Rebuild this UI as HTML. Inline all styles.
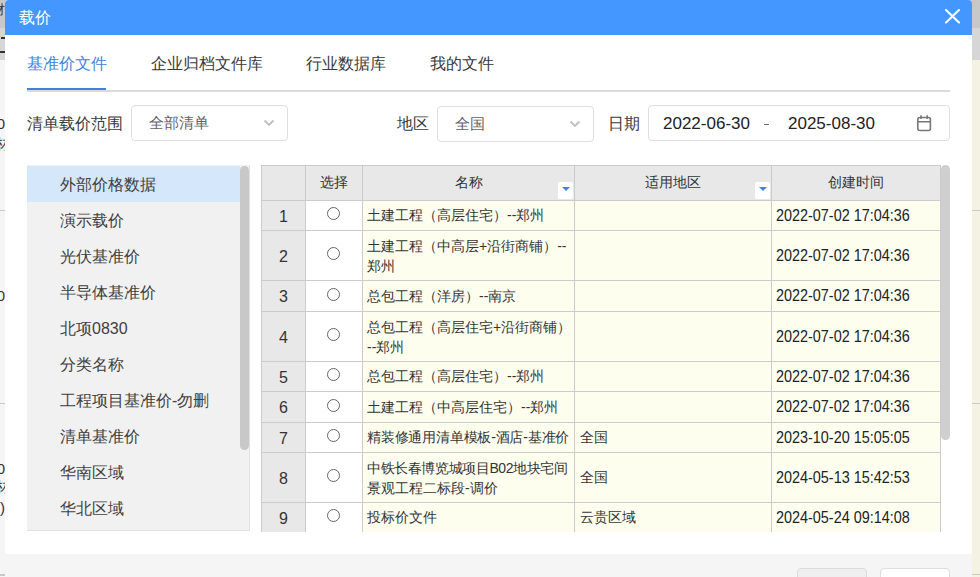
<!DOCTYPE html>
<html><head><meta charset="utf-8">
<style>
*{margin:0;padding:0;box-sizing:border-box}
html,body{width:980px;height:577px;overflow:hidden;background:#f5f5f5;font-family:"Liberation Sans",sans-serif;color:#333}
.abs{position:absolute}
.frag{left:-5px;width:10px;text-align:right;font-size:15px;line-height:20px;color:#333}
#bgl1{left:0;top:0;width:12px;height:28px;background:#c8c8c8}
#bgl2{left:0;top:28px;width:12px;height:32px;background:#d6d6d6}
#bgr1{left:965px;top:0;width:15px;height:28px;background:#c8c8c8}
#bgr2{left:965px;top:28px;width:15px;height:32px;background:#d6d6d6}
#bgr3{left:972px;top:60px;width:8px;height:517px;background:#f4f2e2}
#dlg{left:5px;top:0;width:967px;height:600px;background:#fff;border-radius:4px 4px 0 0;overflow:hidden}
#hdr{left:0;top:0;width:967px;height:35px;background:#4397fe}
#title{left:14px;top:8px;font-size:16px;line-height:20px;color:#fff}
.tab{top:54px;font-size:16px;line-height:20px;color:#3a3a3a;white-space:nowrap}
.lbl{font-size:16px;line-height:20px;color:#3a3a3a;white-space:nowrap}
.sel{border:1px solid #dddee1;border-radius:4px;background:#fff}
.selt{font-size:15px;line-height:20px;color:#606266;white-space:nowrap}
#panel{left:22px;top:165px;width:223px;height:366px;background:#f1f1f1;border-right:1px solid #e2e2e2;border-bottom:1px solid #e2e2e2;overflow:hidden}
.li{position:absolute;left:0;width:213px;height:36px;font-size:16px;line-height:38px;padding-left:33px;color:#404040;white-space:nowrap}
#tbl{left:256px;top:165px;width:680px;height:367px;overflow:hidden;background:#fff}
.th{font-size:14px;line-height:32px;text-align:center;color:#333;white-space:nowrap}
.rnum{font-size:16px;text-align:center;color:#333}
.td{font-size:14px;color:#333;white-space:nowrap}
.dt{font-size:16px;transform:scaleX(0.9);transform-origin:0 50%;color:#222}
.ddb{position:absolute;width:15px;height:17px;background:#fff;border-radius:2px}
.ddb:after{content:"";position:absolute;left:3.5px;top:5px;border-left:4px solid transparent;border-right:4px solid transparent;border-top:4px solid #3a86e8}
.radio{position:absolute;width:13px;height:13px;border:1px solid #666;border-radius:50%;background:#fff}
</style></head><body>
<div class="abs" id="bgl1"></div><div class="abs" id="bgl2"></div>
<div class="abs" id="bgr1"></div><div class="abs" id="bgr2"></div><div class="abs" id="bgr3"></div>
<div class="abs" style="left:972px;top:210px;width:8px;height:1px;background:#c9c9c0"></div>
<div class="abs" style="left:972px;top:403px;width:8px;height:1px;background:#c9c9c0"></div>
<div class="abs" style="left:972px;top:574px;width:8px;height:1px;background:#c9c9c0"></div>
<div class="abs" style="left:0;top:210px;width:5px;height:1px;background:#c9c9c9"></div>
<div class="abs" style="left:0;top:403px;width:5px;height:1px;background:#c9c9c9"></div>
<div class="abs" style="left:0;top:574px;width:5px;height:2px;background:#cacaca"></div>
<div class="abs frag" style="top:0px;font-size:13px;left:-8px;width:auto;text-align:left">材</div>
<div class="abs" style="left:1px;top:37px;width:5px;height:2px;background:#333"></div>
<div class="abs" style="left:0px;top:51px;width:5px;height:2px;background:#333"></div>
<div class="abs frag" style="top:114px">0</div>
<div class="abs frag" style="top:134px">材</div>
<div class="abs frag" style="top:286px">0</div>
<div class="abs frag" style="top:459px">0</div>
<div class="abs frag" style="top:477px">材</div>
<div class="abs frag" style="top:498px">)</div>

<div class="abs" id="dlg">
  <div class="abs" id="hdr"></div>
  <div class="abs" id="title">载价</div>
  <svg class="abs" style="left:939px;top:8px" width="17" height="16" viewBox="0 0 17 16"><path d="M2 2L15 14.6M15 2L2 14.6" stroke="#fff" stroke-width="2.1" stroke-linecap="round" fill="none"/></svg>
  <div class="abs tab" style="left:22px;color:#3d85dc">基准价文件</div>
  <div class="abs tab" style="left:146px">企业归档文件库</div>
  <div class="abs tab" style="left:301px">行业数据库</div>
  <div class="abs tab" style="left:425px">我的文件</div>
  <div class="abs" style="left:22px;top:90px;width:923px;height:2px;background:#dadada"></div>
  <div class="abs" style="left:22px;top:88px;width:79px;height:2px;background:#4083d8"></div>

  <div class="abs lbl" style="left:22px;top:114px">清单载价范围</div>
  <div class="abs sel" style="left:126px;top:105px;width:157px;height:36px"></div>
  <div class="abs selt" style="left:144px;top:113px">全部清单</div>
  <svg class="abs" style="left:258px;top:119px" width="12" height="8" viewBox="0 0 12 8"><path d="M1.5 1.5L6 6L10.5 1.5" stroke="#bdbfc4" stroke-width="1.8" fill="none"/></svg>

  <div class="abs lbl" style="left:392px;top:114px">地区</div>
  <div class="abs sel" style="left:432px;top:106px;width:157px;height:36px"></div>
  <div class="abs selt" style="left:450px;top:114px">全国</div>
  <svg class="abs" style="left:564px;top:120px" width="12" height="8" viewBox="0 0 12 8"><path d="M1.5 1.5L6 6L10.5 1.5" stroke="#bdbfc4" stroke-width="1.8" fill="none"/></svg>

  <div class="abs lbl" style="left:603px;top:114px">日期</div>
  <div class="abs sel" style="left:643px;top:105px;width:302px;height:36px"></div>
  <div class="abs selt" style="left:658px;top:114px;font-size:17px;color:#222">2022-06-30</div>
  <div class="abs" style="left:759px;top:124px;width:5px;height:1px;background:#666"></div>
  <div class="abs selt" style="left:783px;top:114px;font-size:17px;color:#222">2025-08-30</div>
  <svg class="abs" style="left:911px;top:114px" width="16" height="18" viewBox="0 0 16 18"><rect x="1.8" y="3.5" width="12.6" height="13" rx="2" stroke="#777" stroke-width="1.6" fill="none"/><path d="M1.8 7.8H14.4M5 1.2V5M11.2 1.2V5" stroke="#777" stroke-width="1.6"/></svg>

  <div class="abs" id="panel">
    <div class="li" style="top:1px;background:#d4e7fb">外部价格数据</div>
    <div class="li" style="top:37px">演示载价</div>
    <div class="li" style="top:73px">光伏基准价</div>
    <div class="li" style="top:109px">半导体基准价</div>
    <div class="li" style="top:145px">北项0830</div>
    <div class="li" style="top:181px">分类名称</div>
    <div class="li" style="top:217px">工程项目基准价-勿删</div>
    <div class="li" style="top:253px">清单基准价</div>
    <div class="li" style="top:289px">华南区域</div>
    <div class="li" style="top:325px">华北区域</div>
    <div class="abs" style="left:213px;top:1px;width:9px;height:284px;background:#c8c8c8;border-radius:4.5px"></div>
  </div>

  <div class="abs" id="tbl">
<div class="abs" style="left:0;top:0;width:680px;height:35px;background:#e8e8e8"></div>
<div class="abs" style="left:0;top:35px;width:44px;height:332px;background:#e8e8e8"></div>
<div class="abs" style="left:101px;top:35px;width:579px;height:332px;background:#fefeee"></div>
<div class="abs th" style="left:45px;top:1px;width:56px">选择</div>
<div class="abs th" style="left:102px;top:1px;width:211px">名称</div>
<div class="ddb" style="left:297px;top:17px"></div>
<div class="abs th" style="left:314px;top:1px;width:196px">适用地区</div>
<div class="ddb" style="left:494px;top:17px"></div>
<div class="abs th" style="left:511px;top:1px;width:168px">创建时间</div>
<div class="abs rnum" style="left:1px;top:37px;width:43px;height:29px;line-height:29px">1</div>
<div class="radio" style="left:66px;top:42px"></div>
<div class="abs td" style="left:106px;top:36px;line-height:29px">土建工程（高层住宅）--郑州</div>
<div class="abs td dt" style="left:515px;top:36px;line-height:29px">2022-07-02 17:04:36</div>
<div class="abs rnum" style="left:1px;top:67px;width:43px;height:49px;line-height:49px">2</div>
<div class="radio" style="left:66px;top:82px"></div>
<div class="abs td" style="left:106px;top:71px;line-height:20px">土建工程（中高层+沿街商铺）--<br>郑州</div>
<div class="abs td dt" style="left:515px;top:66px;line-height:49px">2022-07-02 17:04:36</div>
<div class="abs rnum" style="left:1px;top:117px;width:43px;height:30px;line-height:30px">3</div>
<div class="radio" style="left:66px;top:123px"></div>
<div class="abs td" style="left:106px;top:116px;line-height:30px">总包工程（洋房）--南京</div>
<div class="abs td dt" style="left:515px;top:116px;line-height:30px">2022-07-02 17:04:36</div>
<div class="abs rnum" style="left:1px;top:148px;width:43px;height:49px;line-height:49px">4</div>
<div class="radio" style="left:66px;top:163px"></div>
<div class="abs td" style="left:106px;top:152px;line-height:20px">总包工程（高层住宅+沿街商铺）<br>--郑州</div>
<div class="abs td dt" style="left:515px;top:147px;line-height:49px">2022-07-02 17:04:36</div>
<div class="abs rnum" style="left:1px;top:198px;width:43px;height:29px;line-height:29px">5</div>
<div class="radio" style="left:66px;top:203px"></div>
<div class="abs td" style="left:106px;top:197px;line-height:29px">总包工程（高层住宅）--郑州</div>
<div class="abs td dt" style="left:515px;top:197px;line-height:29px">2022-07-02 17:04:36</div>
<div class="abs rnum" style="left:1px;top:228px;width:43px;height:30px;line-height:30px">6</div>
<div class="radio" style="left:66px;top:234px"></div>
<div class="abs td" style="left:106px;top:227px;line-height:30px">土建工程（中高层住宅）--郑州</div>
<div class="abs td dt" style="left:515px;top:227px;line-height:30px">2022-07-02 17:04:36</div>
<div class="abs rnum" style="left:1px;top:259px;width:43px;height:29px;line-height:29px">7</div>
<div class="radio" style="left:66px;top:264px"></div>
<div class="abs td" style="left:106px;top:258px;line-height:29px"><span style="letter-spacing:-0.2px">精装修通用清单模板-酒店-基准价</span></div>
<div class="abs td" style="left:319px;top:258px;line-height:29px">全国</div>
<div class="abs td dt" style="left:515px;top:258px;line-height:29px">2023-10-20 15:05:05</div>
<div class="abs rnum" style="left:1px;top:289px;width:43px;height:49px;line-height:49px">8</div>
<div class="radio" style="left:66px;top:304px"></div>
<div class="abs td" style="left:106px;top:293px;line-height:20px"><span style="letter-spacing:-0.4px">中铁长春博览城项目B02地块宅间</span><br>景观工程二标段-调价</div>
<div class="abs td" style="left:319px;top:288px;line-height:49px">全国</div>
<div class="abs td dt" style="left:515px;top:288px;line-height:49px">2024-05-13 15:42:53</div>
<div class="abs rnum" style="left:1px;top:339px;width:43px;height:29px;line-height:29px">9</div>
<div class="radio" style="left:66px;top:344px"></div>
<div class="abs td" style="left:106px;top:338px;line-height:29px">投标价文件</div>
<div class="abs td" style="left:319px;top:338px;line-height:29px">云贵区域</div>
<div class="abs td dt" style="left:515px;top:338px;line-height:29px">2024-05-24 09:14:08</div>
<div class="abs" style="left:0px;top:0;width:1px;height:367px;background:#cbcbcb"></div>
<div class="abs" style="left:44px;top:0;width:1px;height:367px;background:#cbcbcb"></div>
<div class="abs" style="left:101px;top:0;width:1px;height:367px;background:#cbcbcb"></div>
<div class="abs" style="left:313px;top:0;width:1px;height:367px;background:#cbcbcb"></div>
<div class="abs" style="left:510px;top:0;width:1px;height:367px;background:#cbcbcb"></div>
<div class="abs" style="left:679px;top:0;width:1px;height:367px;background:#cbcbcb"></div>
<div class="abs" style="left:0;top:0px;width:680px;height:1px;background:#cbcbcb"></div>
<div class="abs" style="left:0;top:35px;width:680px;height:1px;background:#cbcbcb"></div>
<div class="abs" style="left:0;top:65px;width:680px;height:1px;background:#cbcbcb"></div>
<div class="abs" style="left:0;top:115px;width:680px;height:1px;background:#cbcbcb"></div>
<div class="abs" style="left:0;top:146px;width:680px;height:1px;background:#cbcbcb"></div>
<div class="abs" style="left:0;top:196px;width:680px;height:1px;background:#cbcbcb"></div>
<div class="abs" style="left:0;top:226px;width:680px;height:1px;background:#cbcbcb"></div>
<div class="abs" style="left:0;top:257px;width:680px;height:1px;background:#cbcbcb"></div>
<div class="abs" style="left:0;top:287px;width:680px;height:1px;background:#cbcbcb"></div>
<div class="abs" style="left:0;top:337px;width:680px;height:1px;background:#cbcbcb"></div>
</div>
  <div class="abs" style="left:936px;top:165px;width:9px;height:275px;background:#cfcfcf;border-radius:4.5px 4.5px 4.5px 4.5px"></div>

  <div class="abs" style="left:0;top:554px;width:967px;height:50px;background:#f5f5f5"></div>
  <div class="abs" style="left:792px;top:568px;width:70px;height:30px;background:#efefef;border:1px solid #dcdcdc;border-radius:4px"></div>
  <div class="abs" style="left:875px;top:568px;width:70px;height:30px;background:#fff;border:1px solid #dcdcdc;border-radius:4px"></div>
</div>
</body></html>
